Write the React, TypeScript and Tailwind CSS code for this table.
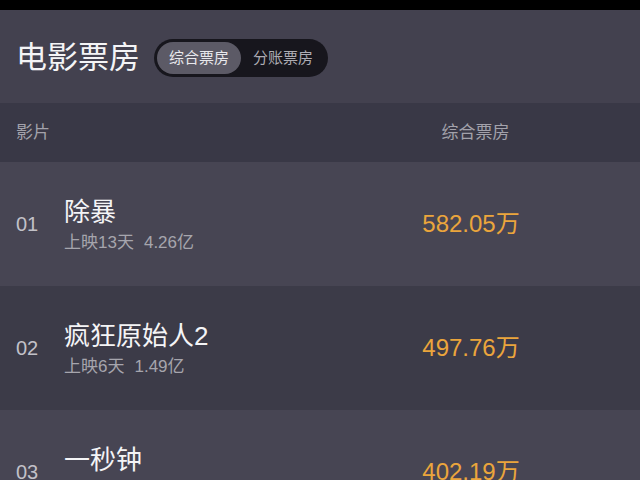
const font = { fontFamily: '"Liberation Sans", "Noto Sans CJK SC", sans-serif' }

const movies = [
  { rank: "01", name: "除暴", days: "上映13天", total: "4.26亿", box: "582.05万" },
  { rank: "02", name: "疯狂原始人2", days: "上映6天", total: "1.49亿", box: "497.76万" },
  { rank: "03", name: "一秒钟", days: "上映6天", total: "1.20亿", box: "402.19万" },
]

export default function App() {
  return (
    <div className="h-[480px] w-[640px] overflow-hidden bg-[#43414f]" style={font}>
      <div className="h-[10px] bg-black" />
      <div className="flex h-[93px] items-center px-4 pt-[3px]">
        <div className="text-[31px] leading-[36px] text-[#f4f4f6]">电影票房</div>
        <div className="ml-[14px] flex h-[38px] items-center rounded-full bg-[#17161d] px-[3px]">
          <div className="flex h-[32px] items-center rounded-full bg-[#5c5a66] px-[12px] text-[15px] text-[#e8e8ec]">
            综合票房
          </div>
          <div className="flex h-[32px] items-center px-[12px] text-[15px] text-[#adacb3]">
            分账票房
          </div>
        </div>
      </div>
      <div className="flex h-[59px] items-center bg-[#393846] pl-4 text-[17px] text-[#a3a2ab]">
        <div className="flex-1">影片</div>
        <div className="w-[160px] pr-[9px] text-center">综合票房</div>
        <div className="w-[80px]" />
      </div>
      {movies.map((m, i) => (
        <div
          key={m.rank}
          className={`flex h-[124px] items-center pl-4 ${i % 2 === 0 ? "bg-[#474553]" : "bg-[#3c3b48]"}`}
        >
          <div className="w-[48px] text-[20px] text-[#c2c1c8]">{m.rank}</div>
          <div className="flex-1">
            <div className="text-[26px] leading-[32px] text-[#f4f4f6]">{m.name}</div>
            <div className="mt-[5px] flex gap-[10px] text-[17px] leading-[20px] text-[#a6a5ad]">
              <span>{m.days}</span>
              <span>{m.total}</span>
            </div>
          </div>
          <div className="w-[160px] pr-[18px] text-center text-[24px] text-[#eba53c]">{m.box}</div>
          <div className="w-[80px]" />
        </div>
      ))}
    </div>
  )
}
